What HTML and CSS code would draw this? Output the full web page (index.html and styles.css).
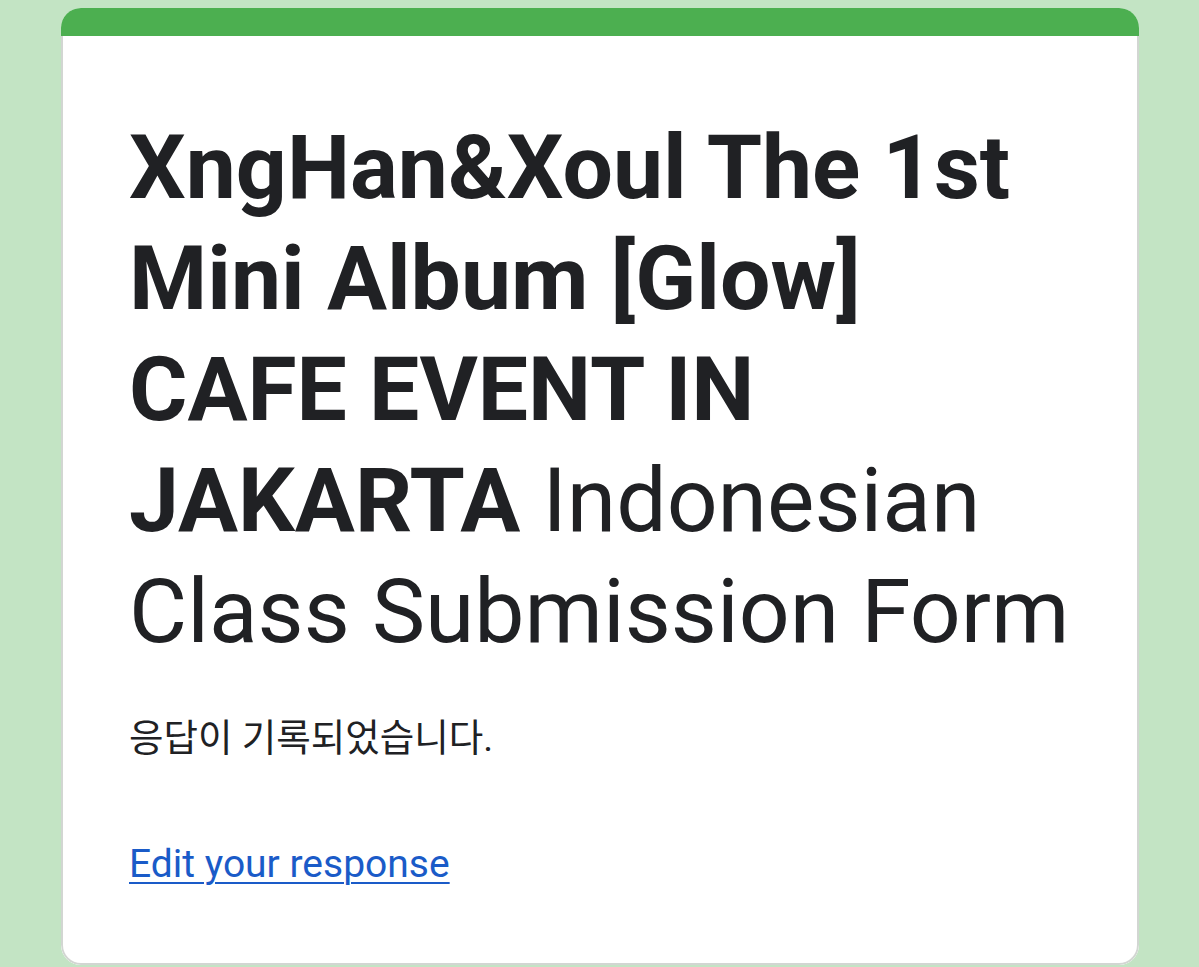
FILE: index.html
```html
<!DOCTYPE html>
<html lang="ko">
<head>
<meta charset="utf-8">
<title>Form response recorded</title>
<link rel="stylesheet" href="styles.css">
</head>
<body>
<main class="page">
  <section class="card">
    <div class="card-bar"></div>
    <div class="card-body">
      <h1 class="form-title"><strong>XngHan&amp;Xoul The 1st Mini Album [Glow] CAFE EVENT IN JAKARTA</strong> Indonesian Class Submission Form</h1>
      <p class="confirm">응답이 기록되었습니다.</p>
      <a class="edit-link" href="#">Edit your response</a>
    </div>
  </section>
</main>
</body>
</html>
```

FILE: styles.css
```css
html, body {
  margin: 0;
  padding: 0;
}

body {
  background: #c3e4c4;
  font-family: Roboto, "Noto Sans CJK KR", "Liberation Sans", sans-serif;
  color: #202124;
  height: 967px;
  overflow: hidden;
}

.page {
  padding-top: 8px;
}

.card {
  width: 1078px;
  margin-left: 61px;
  border-radius: 20px;
  overflow: hidden;
  background: #fff;
}

.card-bar {
  height: 28px;
  background: #4caf50;
}

.card-body {
  height: 851px;
  padding: 76px 66px 0 66px;
  border: 2px solid #d2d6d2;
  border-top: 0;
  border-radius: 0 0 20px 20px;
}

.form-title {
  margin: 0;
  font-size: 89.4px;
  line-height: 111px;
  font-weight: 400;
  letter-spacing: 0;
}

.form-title strong {
  font-weight: 700;
}

.confirm {
  margin: 47px 0 0;
  font-size: 37.5px;
  line-height: 48px;
}

.edit-link {
  display: inline-block;
  margin-top: 78px;
  font-size: 39px;
  line-height: 48px;
  color: #1a5bc8;
  text-decoration: underline;
  text-underline-offset: 5px;
  text-decoration-thickness: 2px;
}
```
